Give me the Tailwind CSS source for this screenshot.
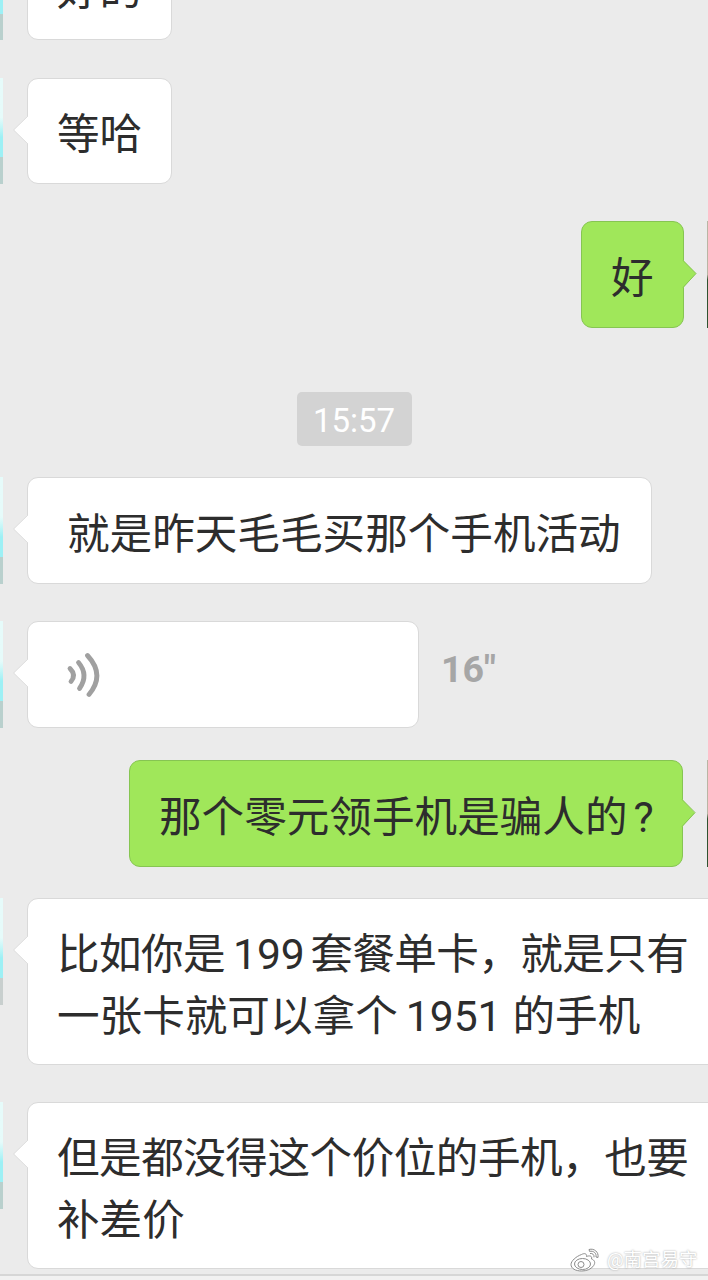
<!DOCTYPE html>
<html lang="zh-CN">
<head>
    <meta charset="UTF-8">
    <meta name="viewport" content="width=device-width, initial-scale=1.0">
    <title>聊天</title>
    <script src="https://cdn.jsdelivr.net/npm/@tailwindcss/browser@4"></script>
</head>
<body class="bg-[#ebebeb]">
    <div id="chat" class="relative h-[1280px] w-[708px] overflow-hidden bg-[#ebebeb] font-['Roboto','Noto_Sans_CJK_SC',sans-serif] text-[42.6px] leading-[61.5px] font-[370] text-[#2d2d2d]">
        <div class="-mt-[66px] flex flex-col">

            <div class="flex h-[106px]">
                <div class="w-[3px] shrink-0 bg-linear-to-b from-[#9df0f5] from-75% to-[#b9d0cd] to-76%"></div>
                <div class="relative ml-6 w-[145px] rounded-[11px] border border-[#d9d9d9] bg-white pt-[25px] pl-[29px] whitespace-nowrap">好的</div>
            </div>

            <div class="mt-[38px] flex h-[106px]">
                <div class="flex w-[3px] shrink-0 flex-col"><div class="h-[79px] bg-linear-to-b from-[#e6fbfa] from-50% to-[#9df0f5] to-75%"></div><div class="grow bg-[#b9d0cd]"></div></div>
                <div class="relative ml-6 w-[145px] rounded-[11px] border border-[#d9d9d9] bg-white pt-[25px] pl-[29px] whitespace-nowrap">
                    <svg class="absolute top-[36px] -left-[15px]" width="16" height="30" viewBox="0 0 16 30"><path d="M16 1h-1L1 15l14 14h1z" fill="#fff"></path><path d="M15 1L.5 15 15 29" fill="none" stroke="#dedede"></path></svg>
                    等哈
                </div>
            </div>

            <div class="mt-[37px] flex h-[107px] justify-end">
                <div class="relative mr-[23px] w-[103px] rounded-[11px] border border-[#86c552] bg-[#a0e75a] pt-[26px] pl-[29px] whitespace-nowrap">
                    好
                    <svg class="absolute top-[37px] -right-[14px]" width="15" height="30" viewBox="0 0 15 30"><path d="M0 1h1l13 13.500L1 29H0z" fill="#a0e75a"></path><path d="M1 1.500L14 14.500 1 28.500" fill="none" stroke="#86c552"></path></svg>
                </div>
                <div class="w-px shrink-0 bg-linear-to-b from-[#b9b5a4] from-50% to-[#2f5230] to-55%"></div>
            </div>

            <div class="mt-[64px] flex justify-center">
                <div class="h-[54px] w-[115px] rounded-[5px] bg-[#d3d3d3] pt-px text-center text-[33px] leading-[56px] text-white">15:57</div>
            </div>

            <div class="mt-[31px] flex h-[107px]">
                <div class="flex w-[3px] shrink-0 flex-col"><div class="h-[80px] bg-linear-to-b from-[#e6fbfa] from-50% to-[#9df0f5] to-75%"></div><div class="grow bg-[#b9d0cd]"></div></div>
                <div class="relative ml-6 w-[625px] rounded-[11px] border border-[#d9d9d9] bg-white pt-[26px] pl-[39px] whitespace-nowrap">
                    <svg class="absolute top-[36px] -left-[15px]" width="16" height="30" viewBox="0 0 16 30"><path d="M16 1h-1L1 15l14 14h1z" fill="#fff"></path><path d="M15 1L.5 15 15 29" fill="none" stroke="#dedede"></path></svg>
                    就是昨天毛毛买那个手机活动
                </div>
            </div>

            <div class="mt-[37px] flex h-[107px]">
                <div class="flex w-[3px] shrink-0 flex-col"><div class="h-[80px] bg-linear-to-b from-[#e6fbfa] from-50% to-[#9df0f5] to-75%"></div><div class="grow bg-[#b9d0cd]"></div></div>
                <div class="relative ml-6 w-[392px] rounded-[11px] border border-[#d9d9d9] bg-white pt-[30px] pl-[38px]">
                    <svg class="absolute top-[36px] -left-[15px]" width="16" height="30" viewBox="0 0 16 30"><path d="M16 1h-1L1 15l14 14h1z" fill="#fff"></path><path d="M15 1L.5 15 15 29" fill="none" stroke="#dedede"></path></svg>
                    <svg width="36" height="46" viewBox="0 0 36 46" fill="none" stroke="#a0a0a0" stroke-width="4.800" stroke-linecap="round">
                        <path d="M4 16.500q6.500 6.500 1 13"></path>
                        <path d="M12.500 10.500q10.500 12.500 1 26"></path>
                        <path d="M21.500 3.500q18 19.500 1.500 39"></path>
                    </svg>
                </div>
                <div class="pt-[18px] pl-[22px] text-[37.5px] font-bold text-[#a6a6a6]">16"</div>
            </div>

            <div class="mt-[32px] flex h-[107px] justify-end">
                <div class="relative mr-[25px] w-[554px] rounded-[11px] border border-[#86c552] bg-[#a0e75a] pt-[26px] pl-[29px] whitespace-nowrap">
                    那个零元领手机是骗人的<span class="ml-[6px]">?</span>
                    <svg class="absolute top-[37px] -right-[14px]" width="15" height="30" viewBox="0 0 15 30"><path d="M0 1h1l13 14L1 29H0z" fill="#a0e75a"></path><path d="M1 1.500L14 14.500 1 28.500" fill="none" stroke="#86c552"></path></svg>
                </div>
                <div class="-ml-px w-px shrink-0 bg-linear-to-b from-[#b9b5a4] from-50% to-[#2f5230] to-55%"></div>
            </div>

            <div class="mt-[31px] flex h-[167px]">
                <div class="flex h-[107px] w-[3px] shrink-0 flex-col"><div class="h-[80px] bg-linear-to-b from-[#e6fbfa] from-50% to-[#9df0f5] to-75%"></div><div class="grow bg-[#c8cfce]"></div></div>
                <div class="relative ml-6 w-[700px] shrink-0 rounded-[11px] border border-[#d9d9d9] bg-white pt-[25px] pl-[29px] whitespace-nowrap">
                    <svg class="absolute top-[36px] -left-[15px]" width="16" height="30" viewBox="0 0 16 30"><path d="M16 1h-1L1 15l14 14h1z" fill="#fff"></path><path d="M15 1L.5 15 15 29" fill="none" stroke="#dedede"></path></svg>
                    <p class="tracking-[-0.6px]">比如你是<span class="mr-[5.5px] ml-[8px] tracking-normal">199</span>套餐单卡，就是只有</p>
                    <p>一张卡就可以拿个<span class="mr-[11px] ml-[8px] tracking-normal">1951</span>的手机</p>
                </div>
            </div>

            <div class="mt-[37px] flex h-[167px]">
                <div class="flex h-[107px] w-[3px] shrink-0 flex-col"><div class="h-[80px] bg-linear-to-b from-[#e6fbfa] from-50% to-[#9df0f5] to-75%"></div><div class="grow bg-[#b9d0cd]"></div></div>
                <div class="relative ml-6 w-[700px] shrink-0 rounded-[11px] border border-[#d9d9d9] bg-white pt-[25px] pl-[29px] whitespace-nowrap">
                    <svg class="absolute top-[36px] -left-[15px]" width="16" height="30" viewBox="0 0 16 30"><path d="M16 1h-1L1 15l14 14h1z" fill="#fff"></path><path d="M15 1L.5 15 15 29" fill="none" stroke="#dedede"></path></svg>
                    <p class="tracking-[-0.5px]">但是都没得这个价位的手机，也要</p>
                    <p>补差价</p>
                </div>
            </div>

            <div class="mt-[5px] h-[6px] border-t-2 border-[#d6d6d6] bg-[#f1f1f1]"></div>
        </div>

        <!-- watermark -->
        <div class="absolute top-[1245px] left-[570px] flex items-center text-[18.5px] leading-[30px] text-white [text-shadow:0_0_2px_#999]">
            <svg class="mr-[6px]" width="31" height="27" viewBox="0 0 31 27" fill="#fff" stroke="#8c8c8c" stroke-width="1">
                <path d="M11.500 7.500c3-1.600 5.500-1 5 2 3-1.200 6-.6 5 2.500 3 1 4.200 3.500 2.200 6.500-2.200 3.600-7 5.500-12 5.500C5.500 24 1 21.500 1 17.500c0-3.500 5-8 10.500-10z"></path>
                <ellipse cx="12.500" cy="17" rx="8" ry="5.500"></ellipse>
                <circle cx="11" cy="17.500" r="3"></circle>
                <path d="M19 2.500c5-1.500 10 2.500 9 8l-2-.5c.6-4-2.500-6.500-6.500-5.600zM20 6.500c2.500-.5 4.500 1.400 4 3.800"></path>
            </svg>
            @南宫易守
        </div>
    </div>
</body>
</html>
